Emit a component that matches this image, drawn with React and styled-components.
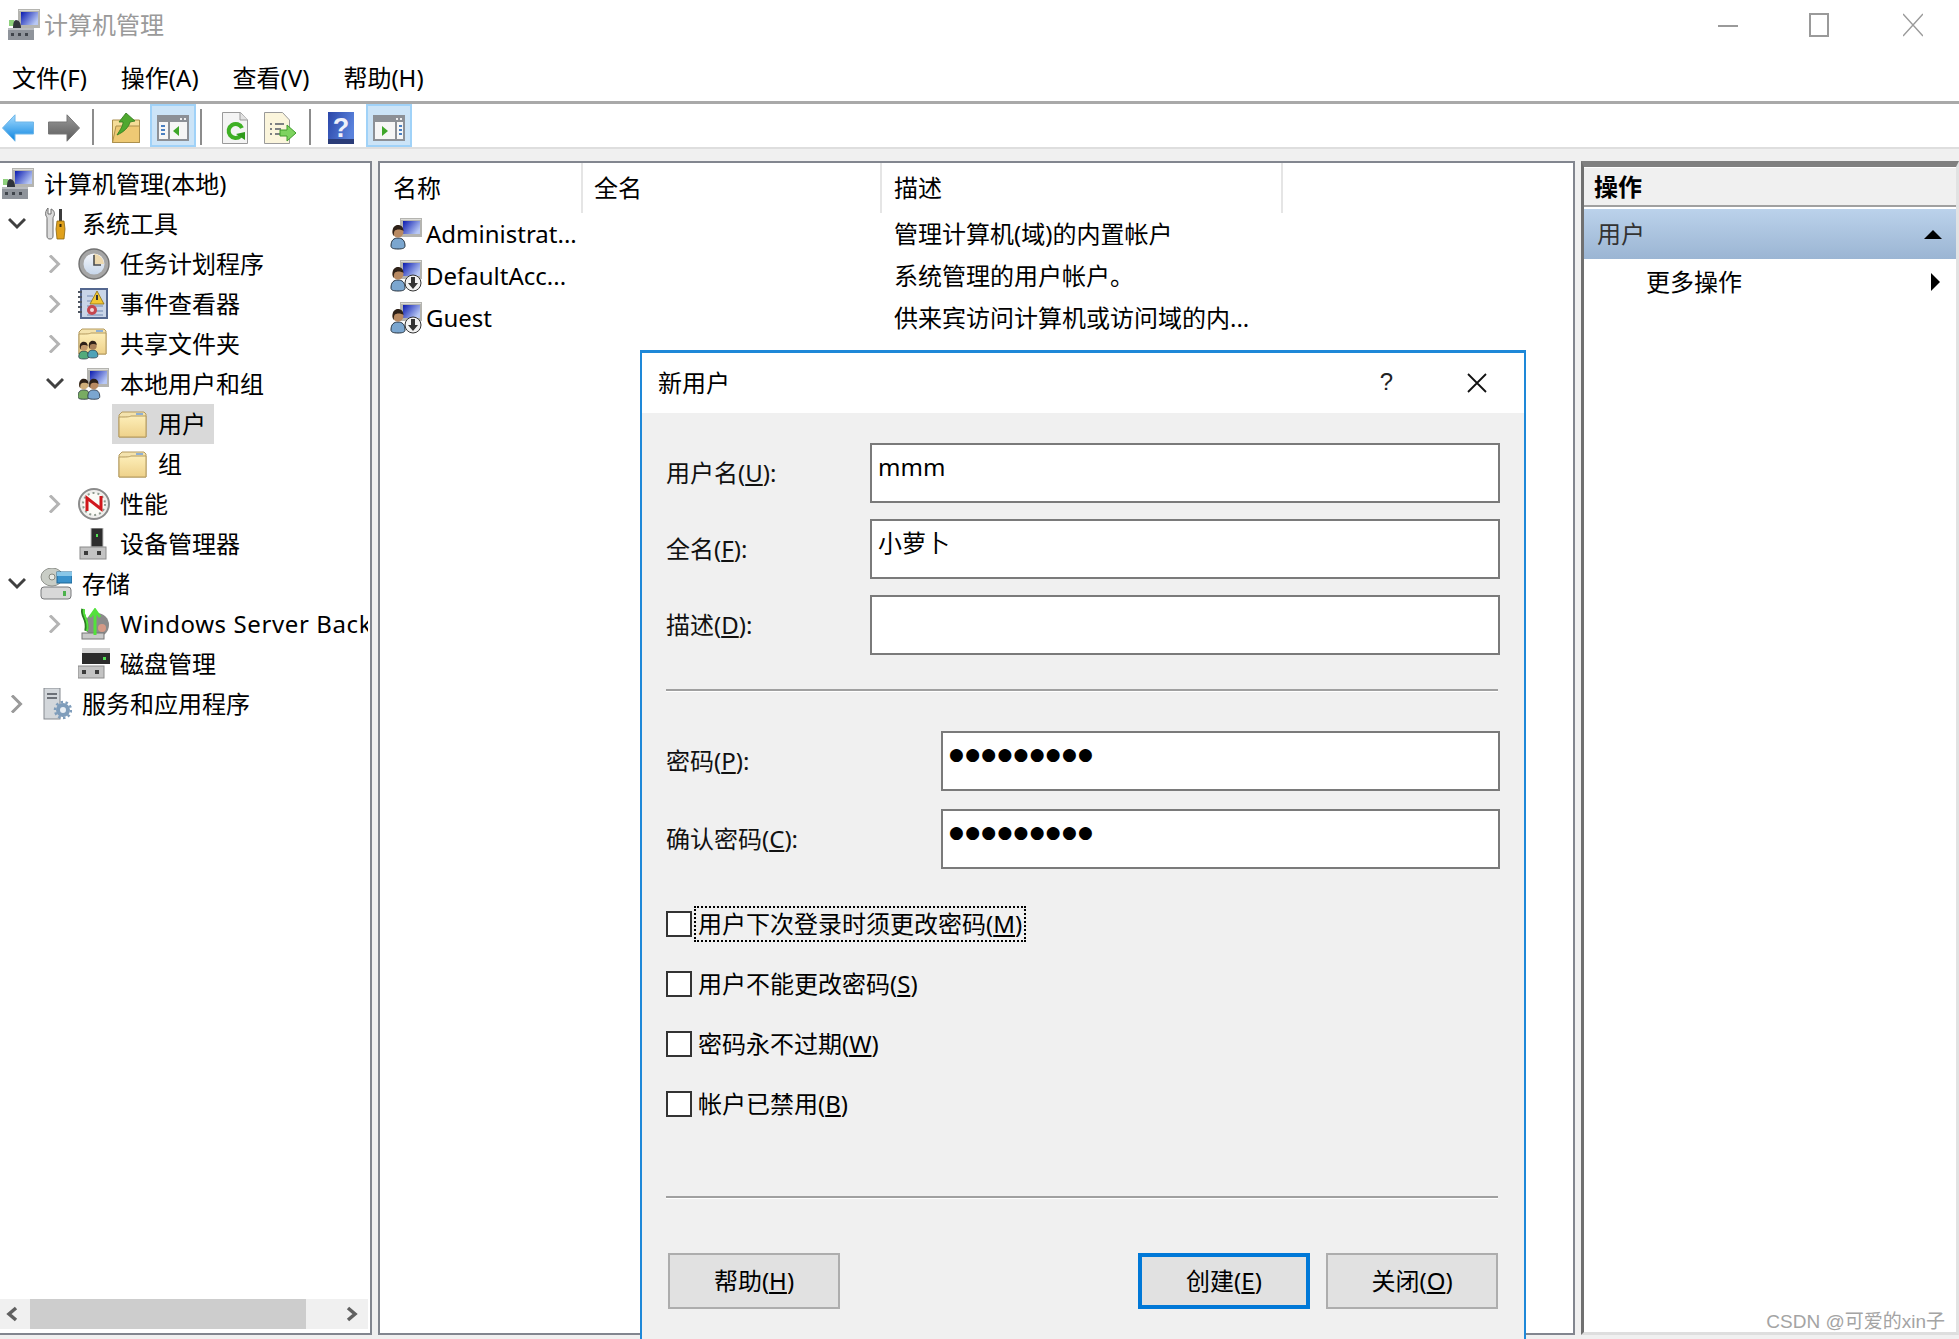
import styled, { createGlobalStyle } from "styled-components";

const GlobalStyle = createGlobalStyle`
  html, body {
    margin: 0;
    padding: 0;
    background: #fff;
  }
  * {
    box-sizing: border-box;
  }
`;

const font = `"Noto Sans", "Noto Sans CJK SC", sans-serif`;

// ---- icons ----

const Glyph = styled.svg`
  display: block;
  flex: none;
`;

const Icon = ({ w = 32, h = 32, children }) => (
  <Glyph width={w} height={h} viewBox={`0 0 ${w} ${h}`}>
    {children}
  </Glyph>
);

const Grad = ({ id, from, to, x2 = 0, y2 = 1 }) => (
  <defs>
    <linearGradient id={id} x1="0" y1="0" x2={x2} y2={y2}>
      <stop offset="0" stopColor={from} />
      <stop offset="1" stopColor={to} />
    </linearGradient>
  </defs>
);

const Screen = ({ x = 10, y = 0 }) => (
  <g transform={`translate(${x} ${y})`}>
    <Grad id="scr" from="#0a1ab0" to="#b8c8f4" x2={1} y2={0.6} />
    <rect width="22" height="19" fill="#b4b4b0" />
    <rect x="1" y="1" width="20" height="1" fill="#dcdcd8" />
    <rect x="3" y="3" width="17" height="13" fill="url(#scr)" />
  </g>
);

const Person = ({ x = 0, y = 0, s = 1, shirt = "#7ba6cf", skin = "#b98a62" }) => (
  <g transform={`translate(${x} ${y}) scale(${s})`}>
    <path d="M1 22c0-6 3-8 7-8s7 2 7 8c0 2-2 3-7 3s-7-1-7-3z" fill={shirt} stroke="#26323f" strokeWidth="1" />
    <circle cx="8" cy="8" r="5.500" fill={skin} />
    <path d="M2.500 8C2.500 3 5 1 8 1s5.500 2 5.500 6C11 5 6 5 4.500 7c-.5 1-1 3-.5 5-1-1-1.500-2-1.500-4z" fill="#2e2118" />
  </g>
);

const ComputerIcon = () => (
  <Icon>
    <Screen x={10} y={0} />
    <rect x="0" y="19" width="26" height="12" fill="#8f949b" />
    <rect x="0" y="19" width="26" height="2" fill="#b9bcc0" />
    <rect x="3" y="24" width="3" height="3" fill="#40454c" />
    <rect x="10" y="24" width="3" height="3" fill="#40454c" />
    <rect x="17" y="24" width="3" height="3" fill="#40454c" />
    <rect x="1" y="11" width="5" height="6" fill="#8ed07c" />
    <path d="M8 11c3 0 5 3 5 8H5c0-5 1-8 3-8z" fill="#30343a" />
  </Icon>
);

const ToolsIcon = () => (
  <Icon>
    <path d="M8 0v6h3V1c3 1 4 4 3 7-1 1-1 2-1 3v17c0 2-1 3-3 3s-3-1-3-3V11c0-1 0-2-1-3-1-3 0-6 2-8z" fill="#dcdcdc" stroke="#6d6d6d" strokeWidth="1" />
    <rect x="19" y="1" width="3" height="12" fill="#3c3c3c" />
    <path d="M17 13h7l1 8-1 10h-7l-1-10z" fill="#e0a11c" stroke="#8a6410" strokeWidth=".8" />
    <rect x="19.500" y="16" width="2" height="3" fill="#3a2c08" />
  </Icon>
);

const ClockIcon = () => (
  <Icon>
    <Grad id="clk" from="#f4f6fb" to="#c7d6ea" />
    <circle cx="16" cy="16" r="15" fill="#a6a6a6" stroke="#727272" strokeWidth="1.400" />
    <circle cx="16" cy="16" r="10.500" fill="url(#clk)" />
    <path d="M16 6a10 10 0 0 1 10 10H16z" fill="#eed9ae" />
    <path d="M16 7v10h7" fill="none" stroke="#4b4b4b" strokeWidth="1.600" />
  </Icon>
);

const EventIcon = () => (
  <Icon>
    <rect x="3" y="1" width="26" height="29" fill="#c9d5e8" stroke="#54678f" strokeWidth="2" />
    <path d="M0 4h4M0 9h4M0 14h4M0 19h4M0 24h4" stroke="#4f5661" strokeWidth="2" />
    <path d="M9 8h6M9 13h6M9 18h16M9 23h16M9 27h16" stroke="#8ea2c4" strokeWidth="1.500" />
    <path d="M19 3l7 13H12z" fill="#f2c733" stroke="#8a6d10" strokeWidth=".8" />
    <rect x="18" y="7" width="2" height="5" fill="#333" />
    <circle cx="14" cy="22" r="5" fill="#c5474f" />
    <circle cx="14" cy="22" r="2" fill="#f2d6d6" />
  </Icon>
);

const FolderShape = () => (
  <>
    <Grad id="fld" from="#fdeeb8" to="#eed18a" />
    <path d="M1 4l3-3h22l2 2v23H1z" fill="#f4e3ad" stroke="#b49a5e" strokeWidth="1" />
    <rect x="18" y="2" width="7" height="2" fill="#8fb0d4" />
    <path d="M1 6c8 0 10 0 12-1h15v21H1z" fill="url(#fld)" stroke="#b49a5e" strokeWidth="1" />
  </>
);

const FolderIcon = () => (
  <Icon w={29} h={27}>
    <FolderShape />
  </Icon>
);

const SharedIcon = () => (
  <Icon>
    <FolderShape />
    <Person x={0} y={13} s={0.72} shirt="#53ab7c" skin="#c39a6c" />
    <Person x={9} y={12} s={0.72} shirt="#4fa3b8" skin="#a77f58" />
  </Icon>
);

const UsersIcon = () => (
  <Icon>
    <Screen x={9} y={0} />
    <Person x={-1} y={10} s={0.85} shirt="#78ab62" skin="#cfae7a" />
    <Person x={9} y={10} s={0.85} shirt="#7ba6cf" />
  </Icon>
);

const GaugeIcon = () => (
  <Icon>
    <circle cx="16" cy="16" r="15" fill="#efefec" stroke="#8b8b8b" strokeWidth="2" />
    <circle cx="16" cy="16" r="11" fill="#fbfbf6" stroke="#8f9a8f" strokeWidth="2" strokeDasharray="2 3" />
    <path d="M9 23V10l14 11V8" fill="none" stroke="#d0161b" strokeWidth="3" />
  </Icon>
);

const Drive = ({ x = 0, y = 20 }) => (
  <g transform={`translate(${x} ${y})`}>
    <rect width="26" height="12" fill="#c3c3c3" stroke="#8c8c8c" />
    <rect x="4" y="4" width="4" height="4" fill="#3b3b3b" />
    <rect x="17" y="4" width="4" height="4" fill="#3b3b3b" />
  </g>
);

const DeviceIcon = () => (
  <Icon>
    <rect x="13" y="0" width="12" height="19" fill="#2d2d2d" stroke="#c4c4c4" />
    <rect x="18" y="6" width="2" height="3" fill="#52e052" />
    <Drive x={2} y={19} />
  </Icon>
);

const StorageIcon = () => (
  <Icon>
    <ellipse cx="12" cy="9" rx="11" ry="9" fill="#c9cdc6" stroke="#8f928d" />
    <circle cx="12" cy="9" r="3" fill="#e9ebe6" stroke="#86887f" />
    <rect x="17" y="4" width="15" height="11" fill="#3a92cc" stroke="#1d6696" />
    <rect x="17" y="4" width="15" height="4" fill="#88c6e8" />
    <rect x="1" y="19" width="30" height="12" rx="3" fill="#d8d8d8" stroke="#77787a" />
    <rect x="23" y="23" width="3" height="5" fill="#4cb24c" />
  </Icon>
);

const BackupIcon = () => (
  <Icon>
    <ellipse cx="19" cy="17" rx="12" ry="12" fill="#8b8b8b" />
    <circle cx="24" cy="20" r="4" fill="#d59a86" />
    <rect x="4" y="25" width="22" height="6" fill="#c9c9c9" stroke="#777" />
    <path d="M5 1c-2 8 6 10 3 22" fill="none" stroke="#2c7a22" strokeWidth="3.500" />
    <path d="M6 1c-2 8 6 10 3 22" fill="none" stroke="#53e23b" strokeWidth="2" />
    <path d="M17 3v24M12 9l5-7 5 7" fill="none" stroke="#53e23b" strokeWidth="3" />
  </Icon>
);

const DiskIcon = () => (
  <Icon>
    <rect x="4" y="0" width="28" height="5" fill="#d4d4d4" />
    <rect x="4" y="5" width="28" height="11" fill="#2c2c2c" />
    <rect x="25" y="9" width="3" height="3" fill="#52e052" />
    <Drive y={18} />
  </Icon>
);

const ServicesIcon = () => (
  <Icon>
    <rect x="4" y="0" width="16" height="31" fill="#d3d7db" stroke="#85898f" />
    <path d="M7 6h10M7 10h10" stroke="#6c7077" strokeWidth="2" />
    <g fill="none" stroke="#7f9dbb">
      <circle cx="23" cy="22" r="5" strokeWidth="4" fill="#e8eef4" />
      <circle cx="23" cy="22" r="8" strokeWidth="2.500" strokeDasharray="2.500 2.500" />
    </g>
  </Icon>
);

const UserIcon = ({ disabled }) => (
  <Icon>
    <Screen x={10} y={0} />
    <Person x={0} y={6} />
    {disabled && (
      <>
        <circle cx="23" cy="23" r="8" fill="#f2f2f2" stroke="#333" />
        <path d="M21 17h4v6h3l-5 6-5-6h3z" fill="#333" />
      </>
    )}
  </Icon>
);

const BackIcon = ({ flip, from, to, line }) => (
  <Glyph width="32" height="28" viewBox="0 0 32 28" style={flip ? { transform: "scaleX(-1)" } : undefined}>
    <Grad id={`arr${from}`} from={from} to={to} />
    <path d="M.5 14L13 .8V8h18.500v12H13v7.200z" fill={`url(#arr${from})`} stroke={line} strokeWidth="1" />
  </Glyph>
);

const UpFolderIcon = () => (
  <Icon w={28} h={30}>
    <path d="M.5 7h27v22.500H.5z" fill="#f5dd98" stroke="#ab8f4d" />
    <path d="M.5 29.500L4 13h23.500v16.500z" fill="#eec974" stroke="#ab8f4d" />
    <path d="M14 0l9 8-5 1c-1 5-6 10-13 13 3-5 6-9 6-13H7z" fill="#4fa82f" stroke="#2f7a1c" strokeWidth=".8" />
  </Icon>
);

const PaneIcon = ({ right }) => (
  <Icon h={26}>
    <rect x="1" y="1" width="30" height="24" fill="#f6f6f6" stroke="#8c9096" strokeWidth="2" />
    <rect x="1" y="1" width="30" height="6" fill="#8c9096" />
    <rect x="23" y="3" width="2" height="2" fill="#eee" />
    <rect x="27" y="3" width="2" height="2" fill="#eee" />
    <rect x={right ? 22 : 11} y="7" width="2" height="18" fill="#8c9096" />
    <path d={right ? "M26 11h3M26 15h3M26 19h3" : "M4 11h4M4 15h4M4 19h4"} stroke="#4a7fc0" strokeWidth="2" />
    <path d={right ? "M9 11l6 5-6 5z" : "M22 11l-6 5 6 5z"} fill="#3fa62a" />
  </Icon>
);

const RefreshIcon = () => (
  <Icon w={26} h={32}>
    <path d="M.5.500h18L25.500 8v23.500H.5z" fill="#f4f4f4" stroke="#9a9a9a" />
    <path d="M18 .5V8h7.500" fill="#e2e2e2" stroke="#9a9a9a" />
    <path d="M18.500 24a7 7 0 1 1 1.500-8" fill="none" stroke="#3eb024" strokeWidth="4" />
    <path d="M14 22l9 6v-8z" fill="#2f9a1c" />
  </Icon>
);

const ExportIcon = () => (
  <Icon h={32}>
    <path d="M.5.500h18L25.500 8v23.500H.5z" fill="#fbf5dc" stroke="#9a9a9a" />
    <path d="M6 12h2M11 12h9M6 17h2M11 17h6M6 22h2M11 22h6" stroke="#555b66" strokeWidth="1.500" />
    <path d="M16 18h7v-5l9 8-9 8v-5h-7z" fill="#7ed35f" stroke="#3f9c2b" />
  </Icon>
);

const HelpIcon = () => (
  <Icon w={26} h={32}>
    <Grad id="hlp" from="#2a46a8" to="#5a82dc" x2={1} y2={0.4} />
    <rect width="26" height="32" fill="url(#hlp)" />
    <rect y="27" width="26" height="5" fill="#2a3c78" />
    <text x="13" y="25" textAnchor="middle" fontFamily="Liberation Sans" fontWeight="700" fontSize="27" fill="#eef0fa">?</text>
  </Icon>
);

const Chevron = ({ open, dark }) => (
  <Glyph width="18" height="18" viewBox="0 0 18 18">
    <path
      d={open ? "M1 4l8 8 8-8" : "M4 .5L12.500 9 4 17.500"}
      fill="none"
      stroke={open ? "#404040" : dark ? "#9a9a9a" : "#b4b4b4"}
      strokeWidth="3"
    />
  </Glyph>
);

// ---- window frame ----

const Page = styled.div`
  position: relative;
  display: flex;
  flex-direction: column;
  width: 1959px;
  height: 1339px;
  overflow: hidden;
  background: #f0f0f0;
  font-family: ${font};
  font-size: 24px;
  color: #000;
`;

const TitleBar = styled.div`
  display: flex;
  align-items: center;
  height: 50px;
  padding: 0 36px 0 8px;
  background: #fff;
  color: #9a9a9a;
`;

const TitleText = styled.div`
  flex: 1;
  margin-left: 4px;
  line-height: 1;
`;

const WindowButtons = styled.div`
  display: flex;
  align-items: center;
  gap: 71px;
  color: #9a9a9a;
`;

const CloseSlot = styled.div`
  margin-left: 3px;
`;

const MenuBar = styled.div`
  display: flex;
  gap: 34px;
  height: 51px;
  padding: 4px 0 0 12px;
  align-items: center;
  background: #fff;
`;

const MenuItem = styled.div`
  line-height: 1;
`;

const Toolbar = styled.div`
  display: flex;
  align-items: center;
  height: 48px;
  padding-left: 2px;
  background: #fff;
  border-top: 3px solid #a9a9a9;
  border-bottom: 2px solid #dedede;
`;

const ToolSep = styled.div`
  flex: none;
  width: 2px;
  height: 36px;
  margin: 3px ${(p) => p.$right}px 0 ${(p) => p.$left}px;
  background: #8c8c8c;
`;

const ToolButton = styled.div`
  display: flex;
  flex: none;
  align-items: center;
  justify-content: center;
  width: ${(p) => p.$w}px;
  height: 43px;
  padding-top: 4px;
  margin-left: ${(p) => p.$gap || 0}px;
  background: ${(p) => (p.$on ? "#cce4f7" : "transparent")};
  border: ${(p) => (p.$on ? "2px solid #a0d2f8" : "0")};
`;

const Panes = styled.div`
  display: flex;
  flex: 1;
  min-height: 0;
  gap: 6px;
  padding: 12px 0 4px;
`;

// ---- tree ----

const TreePanel = styled.div`
  display: flex;
  flex-direction: column;
  flex: none;
  width: 372px;
  background: #fff;
  border-top: 2px solid #82868f;
  border-right: 2px solid #82868f;
  border-bottom: 2px solid #82868f;
`;

const TreeBody = styled.div`
  flex: 1;
  min-height: 0;
  margin-right: 2px;
  padding-top: 1px;
  overflow: hidden;
`;

const TreeRow = styled.div`
  display: flex;
  align-items: center;
  height: 40px;
  padding-left: ${(p) => (p.$level === 0 ? 2 : 2 + 38 * (p.$level - 1))}px;
  white-space: nowrap;
`;

const Twisty = styled.div`
  display: flex;
  flex: none;
  align-items: center;
  justify-content: center;
  width: 30px;
  margin-right: 8px;
`;

const TreeNode = styled.div`
  display: flex;
  align-items: center;
  gap: 10px;
  height: 40px;
  line-height: 1;
  letter-spacing: ${(p) => (p.$spaced ? "0.6px" : "normal")};
  margin-left: ${(p) => (p.$selected ? -4 : 0)}px;
  padding: ${(p) => (p.$selected ? "0 8px 0 4px" : "0")};
  background: ${(p) => (p.$selected ? "#d9d9d9" : "transparent")};
`;

const IconSlot = styled.div`
  display: flex;
  flex: none;
  align-items: center;
  justify-content: center;
  width: 32px;
`;

const HScroll = styled.div`
  display: flex;
  flex: none;
  align-items: center;
  height: 30px;
  margin: 0 2px 4px 0;
  background: #f0f0f0;
`;

const ScrollArrow = styled.div`
  display: flex;
  flex: none;
  align-items: center;
  justify-content: center;
  width: 30px;
  padding-right: ${(p) => p.$nudge}px;
`;

const ScrollTrack = styled.div`
  flex: 1;
  height: 100%;
`;

const ScrollThumb = styled.div`
  width: 276px;
  height: 100%;
  background: #cdcdcd;
`;

// ---- list ----

const ListPanel = styled.div`
  flex: none;
  width: 1197px;
  background: #fff;
  border: 2px solid #82868f;
`;

const Columns = styled.div`
  display: grid;
  grid-template-columns: 203px 299px 401px;
`;

const ListHeader = styled(Columns)`
  height: 50px;
`;

const HeaderCell = styled.div`
  display: flex;
  align-items: center;
  padding-left: ${(p) => p.$pad}px;
  border-right: 2px solid #e5e5e5;
  line-height: 1;
`;

const ListRow = styled(Columns)`
  height: 42px;
  align-items: center;
  line-height: 1;
`;

const NameCell = styled.div`
  display: flex;
  align-items: center;
  gap: 4px;
  padding-left: 10px;
  white-space: nowrap;
`;

const TextCell = styled.div`
  padding-left: 12px;
  white-space: nowrap;
`;

// ---- actions ----

const ActionPanel = styled.div`
  display: flex;
  flex-direction: column;
  flex: 1;
  background: #fff;
  border-left: 3px solid #707070;
  border-top: 6px solid #808080;
  border-right: 3px solid #e2e2e2;
  border-bottom: 3px solid #dedede;
`;

const ActionHead = styled.div`
  display: flex;
  align-items: center;
  height: 39px;
  margin-top: 1px;
  padding-left: 10px;
  background: #f0f0f0;
  border-bottom: 2px solid #a0a0a0;
  font-weight: 700;
  line-height: 1;
`;

const ActionGroup = styled.div`
  display: flex;
  align-items: center;
  justify-content: space-between;
  height: 50px;
  margin-top: 2px;
  padding: 0 14px 0 13px;
  background: linear-gradient(#bbd2eb, #9bb5d3);
  color: #333;
  line-height: 1;
`;

const ActionItem = styled.div`
  display: flex;
  align-items: center;
  justify-content: space-between;
  height: 46px;
  padding: 0 16px 0 62px;
  line-height: 1;
`;

const Triangle = styled.div`
  width: 0;
  height: 0;
  border-style: solid;
  border-color: transparent;
  ${(p) =>
    p.$dir === "up"
      ? "border-width: 0 9px 9px 9px; border-bottom-color: #000;"
      : "border-width: 9px 0 9px 9px; border-left-color: #000;"}
`;

// ---- dialog ----

const Dialog = styled.div`
  position: absolute;
  left: 640px;
  top: 350px;
  display: flex;
  flex-direction: column;
  width: 886px;
  height: 1000px;
  background: #f0f0f0;
  border: 2px solid #1e88d8;
  border-top-width: 3px;
`;

const DialogTitle = styled.div`
  display: flex;
  align-items: center;
  justify-content: space-between;
  flex: none;
  height: 60px;
  padding: 0 37px 0 16px;
  background: #fff;
  line-height: 1;
`;

const DialogControls = styled.div`
  display: flex;
  align-items: center;
  gap: 74px;
`;

const QuestionMark = styled.div`
  margin-top: -2px;
  font-family: "Liberation Sans", sans-serif;
  font-size: 24px;
  color: #222;
`;

const DialogBody = styled.div`
  display: flex;
  flex-direction: column;
  padding: 30px 24px 0 24px;
`;

const FieldStack = styled.div`
  display: flex;
  flex-direction: column;
  gap: ${(p) => p.$gap}px;
`;

const FieldRow = styled.div`
  display: grid;
  grid-template-columns: ${(p) => p.$label}px 1fr;
  align-items: center;
  height: 60px;
`;

const FieldLabel = styled.div`
  line-height: 1;
  color: #111;
`;

const TextBox = styled.div`
  height: 60px;
  padding: ${(p) => (p.$secret ? "2px 6px" : "6px 6px")};
  background: #fff;
  border: 2px solid #7a7a7a;
  line-height: ${(p) => (p.$secret ? "38px" : "32px")};
  font-size: ${(p) => (p.$secret ? "17px" : "24px")};
  letter-spacing: ${(p) => (p.$secret ? "1.300px" : "normal")};
  font-family: ${(p) => (p.$secret ? `"DejaVu Sans", sans-serif` : font)};
`;

const Divider = styled.div`
  height: 3px;
  margin: ${(p) => p.$top}px 2px ${(p) => p.$bottom}px 0;
  background: #a0a0a0;
  border-bottom: 1px solid #fff;
`;

const CheckList = styled.div`
  display: flex;
  flex-direction: column;
  gap: 20px;
  margin-top: 35px;
`;

const CheckRow = styled.div`
  display: flex;
  align-items: center;
  gap: 4px;
  height: 40px;
`;

const CheckBox = styled.div`
  flex: none;
  width: 26px;
  height: 26px;
  background: #fff;
  border: 2px solid #333;
`;

const CheckLabel = styled.div`
  padding: 2px;
  line-height: 28px;
  border: 2px ${(p) => (p.$focus ? "dotted #000" : "solid transparent")};
  margin-left: -2px;
`;

const ButtonRow = styled.div`
  display: flex;
  align-items: center;
  gap: 16px;
  padding: 0 2px;
`;

const DialogButton = styled.div`
  display: flex;
  align-items: center;
  justify-content: center;
  flex: none;
  width: 172px;
  height: 56px;
  margin-right: ${(p) => (p.$push ? "auto" : 0)};
  background: #e1e1e1;
  border: ${(p) => (p.$primary ? "4px solid #0078d7" : "2px solid #adadad")};
  line-height: 1;
`;

const Watermark = styled.div`
  position: absolute;
  right: 14px;
  bottom: 8px;
  font-family: "Liberation Sans", "Noto Sans CJK SC", sans-serif;
  font-size: 19px;
  line-height: 1;
  color: #a4a4a4;
`;

// ---- data ----

const tree = [
  { level: 0, icon: <ComputerIcon />, label: "计算机管理(本地)" },
  { level: 1, twisty: "open", icon: <ToolsIcon />, label: "系统工具" },
  { level: 2, twisty: "closed", icon: <ClockIcon />, label: "任务计划程序" },
  { level: 2, twisty: "closed", icon: <EventIcon />, label: "事件查看器" },
  { level: 2, twisty: "closed", icon: <SharedIcon />, label: "共享文件夹" },
  { level: 2, twisty: "open", icon: <UsersIcon />, label: "本地用户和组" },
  { level: 3, icon: <FolderIcon />, label: "用户", selected: true },
  { level: 3, icon: <FolderIcon />, label: "组" },
  { level: 2, twisty: "closed", icon: <GaugeIcon />, label: "性能" },
  { level: 2, icon: <DeviceIcon />, label: "设备管理器" },
  { level: 1, twisty: "open", icon: <StorageIcon />, label: "存储" },
  { level: 2, twisty: "closed", icon: <BackupIcon />, label: "Windows Server Backup", spaced: true },
  { level: 2, icon: <DiskIcon />, label: "磁盘管理" },
  { level: 1, twisty: "closed", dark: true, icon: <ServicesIcon />, label: "服务和应用程序" },
];

const users = [
  { name: "Administrat...", desc: "管理计算机(域)的内置帐户" },
  { name: "DefaultAcc...", desc: "系统管理的用户帐户。", disabled: true },
  { name: "Guest", desc: "供来宾访问计算机或访问域的内...", disabled: true },
];

const checks = [
  { text: "用户下次登录时须更改密码", key: "M", focus: true },
  { text: "用户不能更改密码", key: "S" },
  { text: "密码永不过期", key: "W" },
  { text: "帐户已禁用", key: "B" },
];

const Hotkey = ({ text, k, colon }) => (
  <>
    {text}(<u>{k}</u>){colon ? ":" : ""}
  </>
);

function App() {
  return (
    <Page>
      <GlobalStyle />
      <TitleBar>
        <ComputerIcon />
        <TitleText>计算机管理</TitleText>
        <WindowButtons>
          <Glyph width="20" height="20" viewBox="0 0 20 20">
            <path d="M0 11h20" stroke="currentColor" strokeWidth="2" />
          </Glyph>
          <Glyph width="20" height="24" viewBox="0 0 20 24">
            <rect x="1" y="1" width="18" height="22" fill="none" stroke="currentColor" strokeWidth="2" />
          </Glyph>
          <CloseSlot>
            <Glyph width="20" height="24" viewBox="0 0 20 24">
              <path d="M0 1l20 22M20 1L0 23" stroke="currentColor" strokeWidth="1.500" fill="none" />
            </Glyph>
          </CloseSlot>
        </WindowButtons>
      </TitleBar>
      <MenuBar>
        <MenuItem>文件(F)</MenuItem>
        <MenuItem>操作(A)</MenuItem>
        <MenuItem>查看(V)</MenuItem>
        <MenuItem>帮助(H)</MenuItem>
      </MenuBar>
      <Toolbar>
        <ToolButton $w={32}>
          <BackIcon from="#a6dcff" to="#0a84e0" line="#6fb6e8" />
        </ToolButton>
        <ToolButton $w={32} $gap={14}>
          <BackIcon flip from="#9a9a9a" to="#5a5a5a" line="#777" />
        </ToolButton>
        <ToolSep $left={12} $right={18} />
        <ToolButton $w={28}>
          <UpFolderIcon />
        </ToolButton>
        <ToolButton $w={46} $gap={10} $on>
          <PaneIcon />
        </ToolButton>
        <ToolSep $left={4} $right={20} />
        <ToolButton $w={26}>
          <RefreshIcon />
        </ToolButton>
        <ToolButton $w={32} $gap={16}>
          <ExportIcon />
        </ToolButton>
        <ToolSep $left={13} $right={17} />
        <ToolButton $w={26}>
          <HelpIcon />
        </ToolButton>
        <ToolButton $w={46} $gap={12} $on>
          <PaneIcon right />
        </ToolButton>
      </Toolbar>
      <Panes>
        <TreePanel>
          <TreeBody>
            {tree.map((n) => (
              <TreeRow key={n.label} $level={n.level}>
                {n.level > 0 && (
                  <Twisty>
                    {n.twisty && <Chevron open={n.twisty === "open"} dark={n.dark} />}
                  </Twisty>
                )}
                <TreeNode $selected={n.selected} $spaced={n.spaced}>
                  <IconSlot>{n.icon}</IconSlot>
                  {n.label}
                </TreeNode>
              </TreeRow>
            ))}
          </TreeBody>
          <HScroll>
            <ScrollArrow $nudge={6}>
              <Glyph width="14" height="16" viewBox="0 0 14 16">
                <path d="M11 2L4 8l7 6" fill="none" stroke="#606060" strokeWidth="3.500" />
              </Glyph>
            </ScrollArrow>
            <ScrollTrack>
              <ScrollThumb />
            </ScrollTrack>
            <ScrollArrow $nudge={2}>
              <Glyph width="14" height="16" viewBox="0 0 14 16">
                <path d="M3 2l7 6-7 6" fill="none" stroke="#606060" strokeWidth="3.500" />
              </Glyph>
            </ScrollArrow>
          </HScroll>
        </TreePanel>

        <ListPanel>
          <ListHeader>
            <HeaderCell $pad={13}>名称</HeaderCell>
            <HeaderCell $pad={11}>全名</HeaderCell>
            <HeaderCell $pad={12}>描述</HeaderCell>
          </ListHeader>
          {users.map((u) => (
            <ListRow key={u.name}>
              <NameCell>
                <UserIcon disabled={u.disabled} />
                {u.name}
              </NameCell>
              <div />
              <TextCell>{u.desc}</TextCell>
            </ListRow>
          ))}
        </ListPanel>

        <ActionPanel>
          <ActionHead>操作</ActionHead>
          <ActionGroup>
            用户
            <Triangle $dir="up" />
          </ActionGroup>
          <ActionItem>
            更多操作
            <Triangle $dir="right" />
          </ActionItem>
        </ActionPanel>
      </Panes>

      <Dialog>
        <DialogTitle>
          新用户
          <DialogControls>
            <QuestionMark>?</QuestionMark>
            <Glyph width="20" height="20" viewBox="0 0 20 20">
              <path d="M1 1l18 18M19 1L1 19" stroke="#111" strokeWidth="1.800" fill="none" />
            </Glyph>
          </DialogControls>
        </DialogTitle>
        <DialogBody>
          <FieldStack $gap={16}>
            <FieldRow $label={204}>
              <FieldLabel>
                <Hotkey text="用户名" k="U" colon />
              </FieldLabel>
              <TextBox>mmm</TextBox>
            </FieldRow>
            <FieldRow $label={204}>
              <FieldLabel>
                <Hotkey text="全名" k="F" colon />
              </FieldLabel>
              <TextBox>小萝卜</TextBox>
            </FieldRow>
            <FieldRow $label={204}>
              <FieldLabel>
                <Hotkey text="描述" k="D" colon />
              </FieldLabel>
              <TextBox />
            </FieldRow>
          </FieldStack>
          <Divider $top={34} $bottom={39} />
          <FieldStack $gap={18}>
            <FieldRow $label={275}>
              <FieldLabel>
                <Hotkey text="密码" k="P" colon />
              </FieldLabel>
              <TextBox $secret>●●●●●●●●●</TextBox>
            </FieldRow>
            <FieldRow $label={275}>
              <FieldLabel>
                <Hotkey text="确认密码" k="C" colon />
              </FieldLabel>
              <TextBox $secret>●●●●●●●●●</TextBox>
            </FieldRow>
          </FieldStack>
          <CheckList>
            {checks.map((c) => (
              <CheckRow key={c.key}>
                <CheckBox />
                <CheckLabel $focus={c.focus}>
                  <Hotkey text={c.text} k={c.key} />
                </CheckLabel>
              </CheckRow>
            ))}
          </CheckList>
          <Divider $top={72} $bottom={54} />
          <ButtonRow>
            <DialogButton $push>
              <Hotkey text="帮助" k="H" />
            </DialogButton>
            <DialogButton $primary>
              <Hotkey text="创建" k="E" />
            </DialogButton>
            <DialogButton>
              <Hotkey text="关闭" k="O" />
            </DialogButton>
          </ButtonRow>
        </DialogBody>
      </Dialog>

      <Watermark>CSDN @可爱的xin子</Watermark>
    </Page>
  );
}

export default App;
